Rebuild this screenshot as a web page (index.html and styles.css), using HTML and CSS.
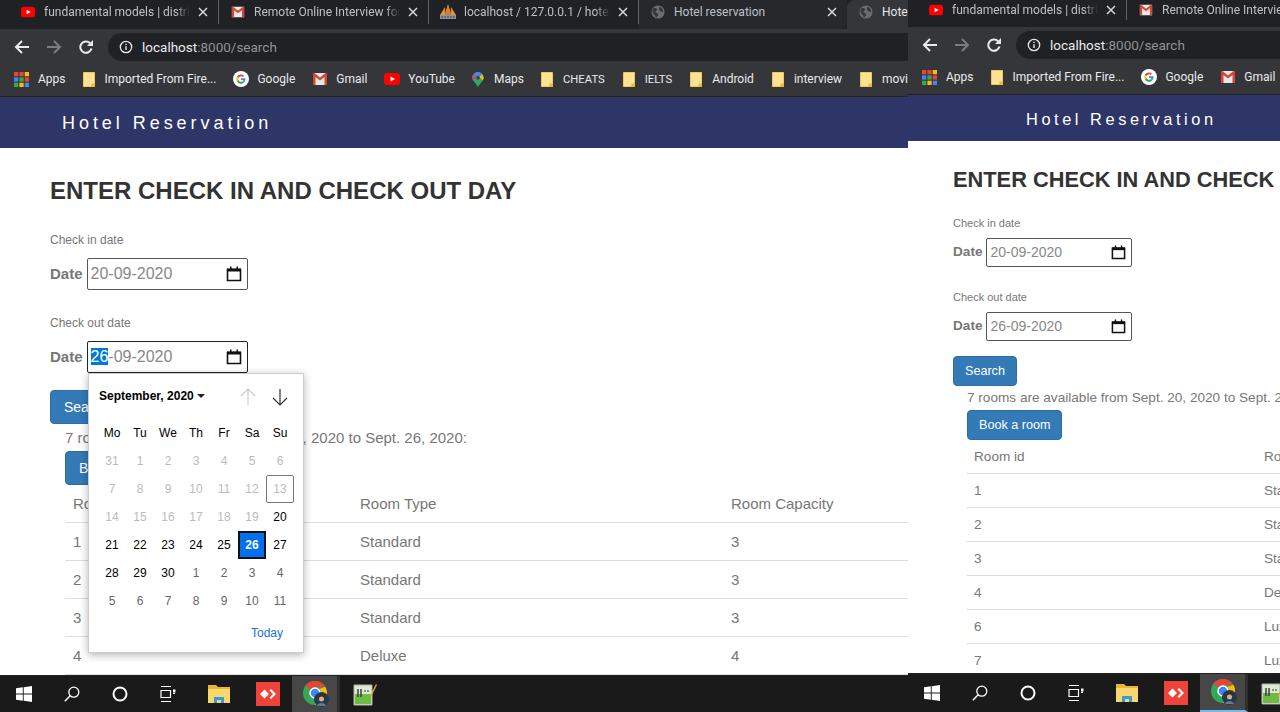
FILE: index.html
```html
<!DOCTYPE html>
<html lang="en">
<head>
    <meta charset="UTF-8">
    <title>Hotel reservation</title>
    <link rel="stylesheet" href="styles.css">
</head>
<body>
    <svg class="defs" width="0" height="0">
        <symbol id="i-yt" viewBox="0 0 16 16"><rect y="2" width="16" height="12" rx="3" fill="#f00"/><path d="M6.500 5.500 11 8l-4.500 2.500z" fill="#fff"/></symbol>
        <symbol id="i-gmail" viewBox="0 0 16 16"><rect x="1" y="2" width="14" height="12" fill="#e8e8e8"/><path d="M1 2v12h2.500V6L8 9.500 12.500 6v8H15V2h-1.500L8 6.500 2.500 2z" fill="#d44638"/></symbol>
        <symbol id="i-pma" viewBox="0 0 16 16"><path d="M0 11 5 3v8zM16 11 11 3v8z" fill="#e8912a"/><path d="M8 0l3.500 11h-7z" fill="#f2a33a"/><path d="M8 2v9M6 7v4M10 7v4" stroke="#7a4a12" stroke-width=".7"/><rect y="11" width="16" height="4" fill="#8a91a8"/><path d="M1 13h14" stroke="#3c4257" stroke-dasharray="2 1"/></symbol>
        <symbol id="i-globe" viewBox="0 0 16 16"><circle cx="8" cy="8" r="7.500" fill="#6a6c70"/><path d="M3 3c2 0 4 1 4 2S5 7 5 8s2 1 3 2-1 4-2 4-2-3-3-4-2-3-1-5zM10 2c2 1 4 3 4 6-1 0-2-1-3-1S9 5 9 4z" fill="#36373b"/></symbol>
        <symbol id="i-folder" viewBox="0 0 12 15"><path d="M.5 .5h11v14H.5z" fill="#fde293" stroke="#f0c95a"/><path d="M8.500 15v-3.500H12V15z" fill="#e8b93a"/></symbol>
        <symbol id="i-google" viewBox="0 0 16 16"><circle cx="8" cy="8" r="8" fill="#fff"/><path d="M8 3.500a4.500 4.500 0 0 1 3 1.200l-1.300 1.300A2.700 2.700 0 0 0 5.500 7L3.900 5.800A4.500 4.500 0 0 1 8 3.500z" fill="#ea4335"/><path d="M3.900 5.800 5.500 7a2.800 2.800 0 0 0 0 2L3.900 10.200a4.500 4.500 0 0 1 0-4.400z" fill="#fbbc05"/><path d="M3.900 10.200 5.500 9a2.700 2.700 0 0 0 4.100 1.300l1.500 1.200A4.500 4.500 0 0 1 3.900 10.200z" fill="#34a853"/><path d="M8 7.200h4.400c.2 1.700-.3 3.200-1.300 4.300L9.600 10.300c.5-.4.800-.9.900-1.400H8z" fill="#4285f4"/></symbol>
        <symbol id="i-maps" viewBox="0 0 12 16"><path d="M6 0a6 6 0 0 1 6 6c0 3-3 5-6 10C3 11 0 9 0 6a6 6 0 0 1 6-6z" fill="#34a853"/><path d="M6 0a6 6 0 0 1 5 2.700L2 10C.8 8.600 0 7.500 0 6a6 6 0 0 1 6-6z" fill="#4285f4"/><path d="M1 2.800 4.500 5 2 8C.8 7 0 6.800 0 6c0-1 .3-2.300 1-3.200z" fill="#ea4335"/><path d="M11 2.700 12 6c0 1-.4 1.800-1 2.700L7 5z" fill="#fbbc05"/><circle cx="6" cy="6" r="2" fill="#444"/></symbol>
        <symbol id="i-apps" viewBox="0 0 14 14"><g fill="#ea4335"><rect width="4" height="4"/><rect x="5" width="4" height="4"/></g><rect x="10" width="4" height="4" fill="#fbbc05"/><rect y="5" width="4" height="4" fill="#4285f4"/><rect x="5" y="5" width="4" height="4" fill="#34a853"/><rect x="10" y="5" width="4" height="4" fill="#ea4335"/><rect y="10" width="4" height="4" fill="#34a853"/><rect x="5" y="10" width="4" height="4" fill="#fbbc05"/><rect x="10" y="10" width="4" height="4" fill="#4285f4"/></symbol>
        <symbol id="i-cal" viewBox="0 0 16 16"><path d="M1.500 3.500h13v11h-13z" fill="none" stroke="#111" stroke-width="1.600"/><rect x="1" y="2.500" width="14" height="3" fill="#111"/><path d="M4 .5h1.500v3H4zM10.500 .5H12v3h-1.500z" fill="#111"/></symbol>
        <symbol id="i-back" viewBox="0 0 16 16"><path d="M15 8H2M8 2 2 8l6 6" fill="none" stroke="currentColor" stroke-width="2"/></symbol>
        <symbol id="i-reload" viewBox="0 0 16 16"><path d="M13.500 9.500a5.700 5.700 0 1 1-1.400-5.300" fill="none" stroke="currentColor" stroke-width="2"/><path d="M15 1v6H9z" fill="currentColor"/></symbol>
        <symbol id="i-info" viewBox="0 0 16 16"><circle cx="8" cy="8" r="6.500" fill="none" stroke="#e8eaed" stroke-width="1.500"/><path d="M7.200 7h1.600v4.500H7.200zM7.200 4.200h1.600v1.600H7.200z" fill="#e8eaed"/></symbol>
        <symbol id="i-close" viewBox="0 0 10 10"><path d="M1 1l8 8M9 1 1 9" stroke="currentColor" stroke-width="1.500"/></symbol>
        <symbol id="i-win" viewBox="0 0 16 16"><path d="M0 2.300 6.800 1.300v6.300H0zM7.700 1.200 16 0v7.600H7.700zM0 8.400h6.800v6.300L0 13.700zM7.700 8.400H16V16l-8.300-1.200z" fill="#fff"/></symbol>
        <symbol id="i-search" viewBox="0 0 16 16"><circle cx="9.800" cy="6.200" r="5" fill="none" stroke="#fff" stroke-width="1.300"/><path d="M6.200 9.800 .8 15.200" stroke="#fff" stroke-width="1.500"/></symbol>
        <symbol id="i-cortana" viewBox="0 0 16 16"><circle cx="8" cy="8" r="6.500" fill="none" stroke="#fff" stroke-width="2"/></symbol>
        <symbol id="i-tasks" viewBox="0 0 16 16"><path d="M1 .5h10M1 15.500h10M1 4.500h9.500v7H1zM13 4.500h2M13 7.500h2" fill="none" stroke="#fff" stroke-width="1.200"/><path d="M13 3.500h2.500v3H13z" fill="#fff"/></symbol>
        <symbol id="i-explorer" viewBox="0 0 22 18"><path d="M0 0h8l2 2h12v16H0z" fill="#e8b637"/><path d="M0 4h22v14H0z" fill="#fbd86b"/><path d="M6 18v-6h10v6h-3v-3H9v3z" fill="#3a9ad9"/></symbol>
        <symbol id="i-anydesk" viewBox="0 0 24 24"><rect width="24" height="24" fill="#ef443b"/><path d="M8.500 7.500 13 12l-4.500 4.500L4 12zM15 7l5 5-5 5-1.500-1.500L17 12l-3.500-3.500z" fill="#fff"/></symbol>
        <symbol id="i-chrome" viewBox="0 0 26 26"><circle cx="12" cy="12" r="12" fill="#34a853"/><path d="M12 0a12 12 0 0 1 10.400 6H12a6 6 0 0 0-5.200 3L2.600 4.500A12 12 0 0 1 12 0z" fill="#ea4335"/><path d="M22.400 6A12 12 0 0 1 12 24l5.200-9a6 6 0 0 0-1-7z" fill="#fbbc05"/><circle cx="12" cy="12" r="5" fill="#4285f4" stroke="#fff" stroke-width="1.500"/><circle cx="18.500" cy="18.500" r="7.500" fill="#26384f"/><path d="M15 15c1-3 6-3 7 0l-1 3h-5z" fill="#3a3026"/><circle cx="18.500" cy="18" r="2.500" fill="#d9b08c"/><path d="M14 25c1-4 8-4 9 0z" fill="#5b7f9b"/></symbol>
        <symbol id="i-notepad" viewBox="0 0 24 24"><path d="M1 3h18v20H1z" fill="#dfe8d2" stroke="#aab09f"/><path d="M2 12h16v10H2z" fill="#6dbb45"/><path d="M5 7v8M8 7v8" stroke="#333" stroke-width="1.400"/><path d="M11 9h5" stroke="#333" stroke-dasharray="2 1"/><path d="M17 14 23 2l1 1-6 12z" fill="#e8a33a"/></symbol>
    </svg>

    <div class="desktop">
        <!-- Left window -->
        <div class="window win-left">
            <div class="tabs">
                <div class="tab"><svg class="fav"><use href="#i-yt"/></svg><span class="tab-title">fundamental models | distributed</span><svg class="tab-x"><use href="#i-close"/></svg></div>
                <div class="tab"><svg class="fav"><use href="#i-gmail"/></svg><span class="tab-title">Remote Online Interview for the job</span><svg class="tab-x"><use href="#i-close"/></svg></div>
                <div class="tab"><svg class="fav fav-pma"><use href="#i-pma"/></svg><span class="tab-title">localhost / 127.0.0.1 / hotel_reservation</span><svg class="tab-x"><use href="#i-close"/></svg></div>
                <div class="tab tab-last"><svg class="fav"><use href="#i-globe"/></svg><span class="tab-title">Hotel reservation</span><svg class="tab-x"><use href="#i-close"/></svg></div>
                <div class="tab tab-active"><svg class="fav"><use href="#i-globe"/></svg><span class="tab-title">Hotel reservation</span></div>
            </div>
            <div class="toolbar">
                <svg class="nav-icon"><use href="#i-back"/></svg>
                <svg class="nav-icon nav-off"><use href="#i-back"/></svg>
                <svg class="nav-icon"><use href="#i-reload"/></svg>
                <div class="omnibox"><svg class="info"><use href="#i-info"/></svg><span class="host">localhost</span><span class="path">:8000/search</span></div>
            </div>
            <div class="bookmarks">
                <div class="bm"><svg class="bm-apps"><use href="#i-apps"/></svg>Apps</div>
                <div class="bm"><svg class="bm-folder"><use href="#i-folder"/></svg>Imported From Fire...</div>
                <div class="bm"><svg class="bm-icon"><use href="#i-google"/></svg>Google</div>
                <div class="bm"><svg class="bm-icon"><use href="#i-gmail"/></svg>Gmail</div>
                <div class="bm"><svg class="bm-icon"><use href="#i-yt"/></svg>YouTube</div>
                <div class="bm"><svg class="bm-folder"><use href="#i-maps"/></svg>Maps</div>
                <div class="bm bm-caps"><svg class="bm-folder"><use href="#i-folder"/></svg>CHEATS</div>
                <div class="bm bm-caps"><svg class="bm-folder"><use href="#i-folder"/></svg>IELTS</div>
                <div class="bm"><svg class="bm-folder"><use href="#i-folder"/></svg>Android</div>
                <div class="bm"><svg class="bm-folder"><use href="#i-folder"/></svg>interview</div>
                <div class="bm"><svg class="bm-folder"><use href="#i-folder"/></svg>movies</div>
            </div>
            <div class="site-nav">Hotel Reservation</div>
            <div class="page">
                <h2>ENTER CHECK IN AND CHECK OUT DAY</h2>
                <p class="field-label">Check in date</p>
                <div class="field">
                    <b>Date</b>
                    <div class="date-input"><span>20-09-2020</span><svg class="cal"><use href="#i-cal"/></svg></div>
                </div>
                <p class="field-label">Check out date</p>
                <div class="field">
                    <b>Date</b>
                    <div class="date-input date-focus"><span><span class="sel">26</span>-09-2020</span><svg class="cal"><use href="#i-cal"/></svg></div>
                </div>
                <button class="btn">Search</button>
                <div class="results">
                    <p>7 rooms are available from Sept. 20, 2020 to Sept. 26, 2020:</p>
                    <button class="btn">Book a room</button>
                    <table>
                        <tr><th>Room id</th><th>Room Type</th><th>Room Capacity</th></tr>
                        <tr><td>1</td><td>Standard</td><td>3</td></tr>
                        <tr><td>2</td><td>Standard</td><td>3</td></tr>
                        <tr><td>3</td><td>Standard</td><td>3</td></tr>
                        <tr><td>4</td><td>Deluxe</td><td>4</td></tr>
                    </table>
                </div>

                <!-- Date picker popup -->
                <div class="picker">
                    <div class="picker-head">
                        <span class="month">September, 2020 <i class="caret"></i></span>
                        <svg class="arrow arrow-off" viewBox="0 0 18 18"><path d="M9 17V1M2 8l7-7 7 7" fill="none" stroke="currentColor" stroke-width="1.200"/></svg>
                        <svg class="arrow" viewBox="0 0 18 18"><path d="M9 1v16M2 10l7 7 7-7" fill="none" stroke="currentColor" stroke-width="1.200"/></svg>
                    </div>
                    <div class="days">
                        <span class="wd">Mo</span><span class="wd">Tu</span><span class="wd">We</span><span class="wd">Th</span><span class="wd">Fr</span><span class="wd">Sa</span><span class="wd">Su</span>
                        <span class="off">31</span><span class="off">1</span><span class="off">2</span><span class="off">3</span><span class="off">4</span><span class="off">5</span><span class="off">6</span>
                        <span class="off">7</span><span class="off">8</span><span class="off">9</span><span class="off">10</span><span class="off">11</span><span class="off">12</span><span class="off today">13</span>
                        <span class="off">14</span><span class="off">15</span><span class="off">16</span><span class="off">17</span><span class="off">18</span><span class="off">19</span><span>20</span>
                        <span>21</span><span>22</span><span>23</span><span>24</span><span>25</span><span class="picked">26</span><span>27</span>
                        <span>28</span><span>29</span><span>30</span><span class="next">1</span><span class="next">2</span><span class="next">3</span><span class="next">4</span>
                        <span class="next">5</span><span class="next">6</span><span class="next">7</span><span class="next">8</span><span class="next">9</span><span class="next">10</span><span class="next">11</span>
                    </div>
                    <div class="picker-foot">Today</div>
                </div>
            </div>
            <div class="taskbar">
                <span class="task"><svg class="ti-sm"><use href="#i-win"/></svg></span>
                <span class="task"><svg class="ti-sm"><use href="#i-search"/></svg></span>
                <span class="task"><svg class="ti-sm"><use href="#i-cortana"/></svg></span>
                <span class="task"><svg class="ti-sm"><use href="#i-tasks"/></svg></span>
                <span class="task"><svg class="ti-folder"><use href="#i-explorer"/></svg></span>
                <span class="task"><svg class="ti-lg"><use href="#i-anydesk"/></svg></span>
                <span class="task task-on"><svg class="ti-chrome"><use href="#i-chrome"/></svg></span>
                <span class="task"><svg class="ti-lg"><use href="#i-notepad"/></svg></span>
            </div>
        </div>

        <!-- Right window -->
        <div class="window win-right">
            <div class="tabs">
                <div class="tab"><svg class="fav"><use href="#i-yt"/></svg><span class="tab-title">fundamental models | distributed</span><svg class="tab-x"><use href="#i-close"/></svg></div>
                <div class="tab"><svg class="fav"><use href="#i-gmail"/></svg><span class="tab-title">Remote Online Interview for the job</span><svg class="tab-x"><use href="#i-close"/></svg></div>
            </div>
            <div class="toolbar">
                <svg class="nav-icon"><use href="#i-back"/></svg>
                <svg class="nav-icon nav-off"><use href="#i-back"/></svg>
                <svg class="nav-icon"><use href="#i-reload"/></svg>
                <div class="omnibox"><svg class="info"><use href="#i-info"/></svg><span class="host">localhost</span><span class="path">:8000/search</span></div>
            </div>
            <div class="bookmarks">
                <div class="bm"><svg class="bm-apps"><use href="#i-apps"/></svg>Apps</div>
                <div class="bm"><svg class="bm-folder"><use href="#i-folder"/></svg>Imported From Fire...</div>
                <div class="bm"><svg class="bm-icon"><use href="#i-google"/></svg>Google</div>
                <div class="bm"><svg class="bm-icon"><use href="#i-gmail"/></svg>Gmail</div>
            </div>
            <div class="site-nav">Hotel Reservation</div>
            <div class="page">
                <h2>ENTER CHECK IN AND CHECK OUT DAY</h2>
                <p class="field-label">Check in date</p>
                <div class="field">
                    <b>Date</b>
                    <div class="date-input"><span>20-09-2020</span><svg class="cal"><use href="#i-cal"/></svg></div>
                </div>
                <p class="field-label">Check out date</p>
                <div class="field">
                    <b>Date</b>
                    <div class="date-input"><span>26-09-2020</span><svg class="cal"><use href="#i-cal"/></svg></div>
                </div>
                <button class="btn">Search</button>
                <div class="results">
                    <p>7 rooms are available from Sept. 20, 2020 to Sept. 26, 2020:</p>
                    <button class="btn">Book a room</button>
                    <table>
                        <tr><th>Room id</th><th>Room Type</th><th>Room Capacity</th></tr>
                        <tr><td>1</td><td>Standard</td><td>3</td></tr>
                        <tr><td>2</td><td>Standard</td><td>3</td></tr>
                        <tr><td>3</td><td>Standard</td><td>3</td></tr>
                        <tr><td>4</td><td>Deluxe</td><td>4</td></tr>
                        <tr><td>6</td><td>Luxury</td><td>5</td></tr>
                        <tr><td>7</td><td>Luxury</td><td>5</td></tr>
                    </table>
                </div>
            </div>
            <div class="taskbar">
                <span class="task"><svg class="ti-sm"><use href="#i-win"/></svg></span>
                <span class="task"><svg class="ti-sm"><use href="#i-search"/></svg></span>
                <span class="task"><svg class="ti-sm"><use href="#i-cortana"/></svg></span>
                <span class="task"><svg class="ti-sm"><use href="#i-tasks"/></svg></span>
                <span class="task"><svg class="ti-folder"><use href="#i-explorer"/></svg></span>
                <span class="task"><svg class="ti-lg"><use href="#i-anydesk"/></svg></span>
                <span class="task task-on"><svg class="ti-chrome"><use href="#i-chrome"/></svg></span>
                <span class="task"><svg class="ti-lg"><use href="#i-notepad"/></svg></span>
            </div>
        </div>
    </div>
</body>
</html>
```

FILE: styles.css
```css
* {
    margin: 0;
    padding: 0;
    box-sizing: border-box;
}

body {
    font-family: "Liberation Sans", Arial, sans-serif;
    background: #fff;
    overflow: hidden;
}

.defs {
    position: absolute;
}

.desktop {
    position: relative;
    width: 1280px;
    height: 712px;
    overflow: hidden;
}

.window {
    position: absolute;
    top: 0;
    height: 712px;
    display: flex;
    flex-direction: column;
    overflow: hidden;
    background: #fff;
}

.win-left {
    left: 0;
    width: 908px;
}

.win-right {
    left: 908px;
    width: 372px;
}

/* browser chrome */
.tabs {
    height: 29px;
    flex: none;
    display: flex;
    background: #202124;
    padding-left: 9px;
    font-family: Roboto, sans-serif;
    font-size: 12px;
    color: #bdc1c6;
}

.tab {
    width: 210px;
    height: 24px;
    flex: none;
    display: flex;
    align-items: center;
    padding: 0 10px 0 12px;
    border-right: 1px solid #5f6368;
}

.tab-last {
    width: 208px;
    height: 29px;
    padding-bottom: 5px;
    border-right: none;
    border-bottom-right-radius: 8px;
    background: #27282b;
}

.tab-active {
    width: 200px;
    height: 29px;
    padding-bottom: 5px;
    background: #35363a;
    border: none;
    color: #e8eaed;
    border-top-left-radius: 8px;
}

.win-right .tabs {
    height: 27px;
}

.win-right .tab {
    height: 20px;
}

.fav {
    width: 14px;
    height: 14px;
    flex: none;
    margin-right: 9px;
}

.fav-pma {
    width: 16px;
    height: 16px;
    margin: 0 8px 0 -1px;
}

.tab-title {
    flex: 1;
    white-space: nowrap;
    overflow: hidden;
    -webkit-mask-image: linear-gradient(90deg, #000 90%, transparent);
    mask-image: linear-gradient(90deg, #000 90%, transparent);
}

.tab-last .tab-title,
.tab-active .tab-title {
    -webkit-mask-image: none;
    mask-image: none;
}

.tab-x {
    width: 10px;
    height: 10px;
    flex: none;
    margin-left: 8px;
    color: #d5d7da;
}

.toolbar {
    height: 35px;
    flex: none;
    display: flex;
    align-items: center;
    background: #35363a;
    padding: 1px 0 0 14px;
    color: #e8eaed;
}

.nav-icon {
    width: 16px;
    height: 16px;
    flex: none;
    margin-right: 16px;
}

.nav-off {
    transform: scaleX(-1);
    color: #7a7c80;
}

.omnibox {
    flex: 1;
    height: 28px;
    margin-left: -2px;
    background: #202124;
    border-radius: 14px 0 0 14px;
    display: flex;
    align-items: center;
    padding-left: 11px;
    font-family: Roboto, sans-serif;
    font-size: 13.500px;
}

.info {
    width: 14px;
    height: 14px;
    margin-right: 9px;
}

.host {
    color: #e8eaed;
}

.path {
    color: #8f9296;
}

.bookmarks {
    height: 33px;
    flex: none;
    display: flex;
    align-items: center;
    gap: 17px;
    padding: 0 0 2px 14px;
    background: #35363a;
    border-bottom: 1px solid #222;
    font-family: Roboto, sans-serif;
    font-size: 12px;
    color: #e8eaed;
    white-space: nowrap;
}

.bm {
    display: flex;
    align-items: center;
    flex: none;
}

.bm:nth-child(n+8) {
    margin-left: 1px;
}

.bm-caps {
    font-size: 11.300px;
}

.bm-apps {
    width: 15px;
    height: 15px;
    margin-right: 9px;
}

.bm-folder {
    width: 12px;
    height: 15px;
    margin-right: 10px;
}

.bm-icon {
    width: 16px;
    height: 16px;
    margin-right: 8px;
}

.site-nav {
    height: 51px;
    flex: none;
    background: #2d3666;
    color: #fff;
    font-size: 18px;
    letter-spacing: 3.950px;
    line-height: 52px;
    padding-left: 62px;
}

.win-right .site-nav {
    height: 46px;
    font-size: 16.400px;
    letter-spacing: 3.550px;
    line-height: 48px;
    padding-left: 118px;
}

/* page content */
.page {
    flex: 1;
    position: relative;
    overflow: hidden;
    padding: 30px 0 0 50px;
    color: #777;
    font-size: 15px;
}

h2 {
    font-size: 24px;
    line-height: 26px;
    color: #333;
    white-space: nowrap;
    margin-bottom: 28px;
}

.field-label {
    font-size: 12px;
    line-height: 16px;
    margin-bottom: 10px;
}

.field {
    display: flex;
    align-items: center;
    gap: 4px;
    margin-bottom: 25px;
}

.field b {
    margin-top: -2px;
}

.field + .field-label + .field {
    margin-bottom: 17px;
}

.date-input {
    width: 161px;
    height: 32px;
    border: 1px solid #555;
    border-radius: 2px;
    display: flex;
    align-items: center;
    justify-content: space-between;
    padding: 0 5px 0 3px;
    font-size: 16px;
    color: #888;
}

.date-focus {
    border-color: #222;
}

.sel {
    background: #0078d7;
    color: #fff;
}

.cal {
    width: 16px;
    height: 16px;
}

.btn {
    display: block;
    height: 34px;
    padding: 0 13px;
    background: #337ab7;
    border: 1px solid #2e6da4;
    border-radius: 4px;
    color: #fff;
    font-family: inherit;
    font-size: 14px;
}

.results {
    padding-left: 15px;
    margin-top: 3px;
}

.results p {
    line-height: 22px;
    margin-bottom: 2px;
    white-space: nowrap;
}

table {
    width: 1000px;
    table-layout: fixed;
    border-collapse: collapse;
    margin-top: -1px;
}

th,
td {
    text-align: left;
    font-weight: normal;
    padding: 0 8px;
    height: 38px;
    border-bottom: 1px solid #ddd;
}

th {
    padding-top: 2px;
}

th:first-child {
    width: 287px;
}

th:nth-child(2) {
    width: 371px;
}

/* right window is at 100% zoom, the left one at 110% */
.win-right .page {
    padding: 27px 0 0 45px;
    font-size: 13.600px;
}

.win-right h2 {
    font-size: 21.800px;
    line-height: 24px;
    margin-bottom: 23px;
}

.win-right .field-label {
    font-size: 11px;
    margin-bottom: 7px;
}

.win-right .field {
    gap: 4px;
    margin-bottom: 22px;
}

.win-right .field + .field-label + .field {
    margin-bottom: 15px;
}

.win-right .date-input {
    width: 146px;
    height: 29px;
    padding: 0 5px 2px 3px;
    font-size: 14px;
}

.win-right .cal {
    width: 15px;
    height: 15px;
    margin-top: 2px;
}

.win-right .btn {
    height: 30px;
    padding: 0 11px;
    font-size: 12.600px;
}

.win-right .results {
    padding-left: 14px;
    margin-top: 2px;
}

.win-right .results p {
    line-height: 20px;
    margin-bottom: 2px;
}

.win-right table {
    margin-top: 0;
}

.win-right th,
.win-right td {
    padding: 0 7px;
    height: 34px;
}

.win-right th {
    height: 33px;
}

.win-right th:first-child {
    width: 290px;
}

/* date picker */
.picker {
    position: absolute;
    left: 88px;
    top: 225px;
    width: 216px;
    height: 280px;
    background: #fff;
    border: 1px solid #ccc;
    box-shadow: 0 2px 8px rgba(0, 0, 0, 0.3);
    font-size: 12px;
    color: #000;
    padding: 0 10px;
}

.picker-head {
    display: flex;
    align-items: center;
    height: 45px;
}

.month {
    flex: 1;
    font-weight: bold;
    margin-top: -2px;
}

.caret {
    display: inline-block;
    border: 4px solid transparent;
    border-top-color: #222;
    border-bottom: none;
    vertical-align: 2px;
}

.arrow {
    width: 18px;
    height: 18px;
    margin-left: 14px;
    color: #333;
}

.arrow + .arrow {
    margin-right: 4px;
}

.arrow-off {
    color: #ccc;
}

.days {
    display: grid;
    grid-template-columns: repeat(7, 28px);
    grid-auto-rows: 28px;
    margin-left: -1px;
}

.days span {
    display: flex;
    align-items: center;
    justify-content: center;
}

.days .off {
    color: #bbb;
}

.days .next {
    color: #666;
}

.days .today {
    border: 1px solid #777;
    border-radius: 2px;
}

.days .picked {
    background: #0070f0;
    border: 2px solid #111;
    color: #fff;
    font-weight: bold;
}

.picker-foot {
    text-align: right;
    color: #1a6fd8;
    padding: 11px 10px 0 0;
}

/* taskbar */
.taskbar {
    height: 37px;
    flex: none;
    display: flex;
    background: #1a1a1a;
    border-top: 1px solid #222;
}

.win-right .taskbar {
    height: 39px;
}

.task {
    width: 48px;
    flex: none;
    display: flex;
    align-items: center;
    justify-content: center;
}

.task:nth-child(5) {
    margin-left: 3px;
}

.task:nth-child(6) {
    margin-left: 1px;
}

.task:nth-child(8) {
    margin-left: 1px;
}

.task-on {
    background: #474747;
    border-right: 3px solid #2f2f2f;
    padding-left: 3px;
}

.win-right .task-on {
    border-bottom: 2px solid #76b9ed;
}

.ti-sm {
    width: 16px;
    height: 16px;
}

.ti-folder {
    width: 22px;
    height: 18px;
}

.ti-lg {
    width: 24px;
    height: 24px;
}

.ti-chrome {
    width: 26px;
    height: 26px;
}
```
